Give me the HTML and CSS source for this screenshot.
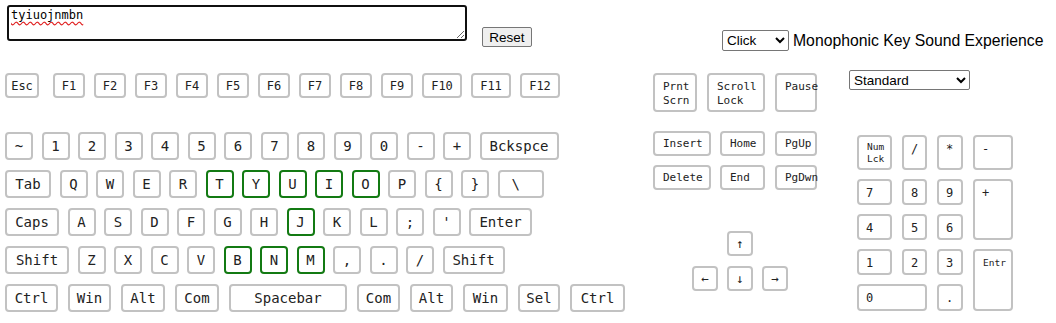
FILE: index.html
```html
<!DOCTYPE html>
<html lang="en">
<head>
<meta charset="utf-8">
<title>Keyboard</title>
<link rel="stylesheet" href="styles.css">
</head>
<body>
<div class="top">
  <textarea class="typed" spellcheck="false">tyiuojnmbn</textarea>
  <button class="reset">Reset</button>
  <div class="sound">
    <select class="sound-select"><option>Click</option></select>
    <span class="sound-label">Monophonic Key Sound Experience</span>
  </div>
</div>
<div class="board">
  <div class="main">
    <div class="row fn">
      <div class="key w-esc">Esc</div>
      <div class="key w-f">F1</div>
      <div class="key w-f">F2</div>
      <div class="key w-f">F3</div>
      <div class="key w-f">F4</div>
      <div class="key w-f">F5</div>
      <div class="key w-f">F6</div>
      <div class="key w-f">F7</div>
      <div class="key w-f">F8</div>
      <div class="key w-f">F9</div>
      <div class="key w-f10">F10</div>
      <div class="key w-f10">F11</div>
      <div class="key w-f10">F12</div>
    </div>
    <div class="row std">
      <div class="key">~</div>
      <div class="key">1</div>
      <div class="key">2</div>
      <div class="key">3</div>
      <div class="key">4</div>
      <div class="key">5</div>
      <div class="key">6</div>
      <div class="key">7</div>
      <div class="key">8</div>
      <div class="key">9</div>
      <div class="key">0</div>
      <div class="key">-</div>
      <div class="key">+</div>
      <div class="key w-bksp">Bckspce</div>
    </div>
    <div class="row std">
      <div class="key w-tab">Tab</div>
      <div class="key">Q</div>
      <div class="key">W</div>
      <div class="key">E</div>
      <div class="key">R</div>
      <div class="key on">T</div>
      <div class="key on">Y</div>
      <div class="key on">U</div>
      <div class="key on">I</div>
      <div class="key on">O</div>
      <div class="key">P</div>
      <div class="key">{</div>
      <div class="key">}</div>
      <div class="key w-tab left">\</div>
    </div>
    <div class="row std">
      <div class="key w-caps">Caps</div>
      <div class="key">A</div>
      <div class="key">S</div>
      <div class="key">D</div>
      <div class="key">F</div>
      <div class="key">G</div>
      <div class="key">H</div>
      <div class="key on">J</div>
      <div class="key">K</div>
      <div class="key">L</div>
      <div class="key">;</div>
      <div class="key">'</div>
      <div class="key w-enter">Enter</div>
    </div>
    <div class="row std">
      <div class="key w-shift">Shift</div>
      <div class="key">Z</div>
      <div class="key">X</div>
      <div class="key">C</div>
      <div class="key">V</div>
      <div class="key on">B</div>
      <div class="key on">N</div>
      <div class="key on">M</div>
      <div class="key">,</div>
      <div class="key">.</div>
      <div class="key">/</div>
      <div class="key w-rshift">Shift</div>
    </div>
    <div class="row bottom">
      <div class="key w-ctrl">Ctrl</div>
      <div class="key w-43">Win</div>
      <div class="key w-44">Alt</div>
      <div class="key w-44">Com</div>
      <div class="key w-space">Spacebar</div>
      <div class="key w-43">Com</div>
      <div class="key w-43">Alt</div>
      <div class="key w-45">Win</div>
      <div class="key w-42">Sel</div>
      <div class="key w-rctrl">Ctrl</div>
    </div>
  </div>

  <div class="nav">
    <div class="nav-row sys">
      <div class="key nk w-prnt">Prnt<br>Scrn</div>
      <div class="key nk w-scroll">Scroll<br>Lock</div>
      <div class="key nk w-pause">Pause</div>
    </div>
    <div class="nav-row edit first">
      <div class="key nk w-ins">Insert</div>
      <div class="key nk w-home">Home</div>
      <div class="key nk w-pg">PgUp</div>
    </div>
    <div class="nav-row edit">
      <div class="key nk w-ins">Delete</div>
      <div class="key nk w-home">End</div>
      <div class="key nk w-pg">PgDwn</div>
    </div>
    <div class="arrows">
      <div class="arrow-row up">
        <div class="key ak">&#8593;</div>
      </div>
      <div class="arrow-row">
        <div class="key ak">&#8592;</div>
        <div class="key ak">&#8595;</div>
        <div class="key ak">&#8594;</div>
      </div>
    </div>
  </div>

  <div class="numside">
    <select class="layout-select"><option>Standard</option></select>
    <div class="numpad">
      <div class="key pk small">Num<br>Lck</div>
      <div class="key pk">/</div>
      <div class="key pk">*</div>
      <div class="key pk">-</div>
      <div class="key pk">7</div>
      <div class="key pk">8</div>
      <div class="key pk">9</div>
      <div class="key pk tall">+</div>
      <div class="key pk">4</div>
      <div class="key pk">5</div>
      <div class="key pk">6</div>
      <div class="key pk">1</div>
      <div class="key pk">2</div>
      <div class="key pk">3</div>
      <div class="key pk tall small entr">Entr</div>
      <div class="key pk wide">0</div>
      <div class="key pk">.</div>
    </div>
  </div>
</div>
</body>
</html>
```

FILE: styles.css
```css
html, body {
  margin: 0;
  padding: 0;
  background: #ffffff;
}

body {
  font-family: "Liberation Sans", Arial, sans-serif;
  color: #000;
  width: 1056px;
  height: 323px;
  overflow: hidden;
}

/* ---------- top bar ---------- */
.top {
  display: flex;
  align-items: flex-start;
  height: 70px;
  box-sizing: border-box;
  padding: 5px 0 0 7px;
}

.typed {
  box-sizing: border-box;
  width: 460px;
  height: 36px;
  margin: 0;
  padding: 1px 2px;
  border: 2px solid #101010;
  border-radius: 3px;
  outline: none;
  font-family: "DejaVu Sans Mono", "Liberation Mono", monospace;
  font-size: 12px;
  line-height: 15px;
  color: #000;
  text-decoration: underline wavy #e02020;
  text-decoration-skip-ink: none;
  text-underline-offset: 2px;
}

.reset {
  box-sizing: border-box;
  width: 50px;
  height: 20px;
  margin: 22px 0 0 15px;
  padding: 0;
  font-family: "Liberation Sans", Arial, sans-serif;
  font-size: 13.5px;
  color: #000;
  background: #efefef;
  border: 1px solid #767676;
  border-radius: 2px;
}

.sound {
  display: flex;
  align-items: center;
  margin: 25px 0 0 190px;
}

.sound-select {
  box-sizing: border-box;
  width: 67px;
  height: 21px;
  margin: 0;
  font-family: "Liberation Sans", Arial, sans-serif;
  font-size: 13.5px;
  color: #000;
  background: #fff;
  border: 1px solid #767676;
  border-radius: 2px;
}

.sound-label {
  margin-left: 4px;
  font-size: 15.75px;
  color: #000;
  white-space: nowrap;
}

/* ---------- keyboard ---------- */
.board {
  display: flex;
  align-items: flex-start;
  padding-left: 5px;
}

.key {
  box-sizing: border-box;
  display: flex;
  align-items: center;
  justify-content: center;
  background: #fff;
  border: 2px solid #c2c2c2;
  border-radius: 4px;
  color: #222;
  font-family: "DejaVu Sans Mono", "Liberation Mono", monospace;
  white-space: nowrap;
}

.key.on {
  border-color: #137a13;
}

.main {
  width: 621px;
  margin-top: 3px;
}

.row {
  display: flex;
}

.row.fn {
  gap: 9px;
  height: 25px;
  margin-bottom: 34px;
}

.row.fn .key {
  height: 25px;
  font-size: 12px;
}

.w-esc { width: 34px; margin-right: 5px; }
.w-f { width: 32px; }
.w-f10 { width: 40px; }

.row.std {
  gap: 8.5px;
  height: 28px;
  margin-bottom: 10px;
}

.row.std .key,
.row.bottom .key {
  width: 28px;
  height: 28px;
  font-size: 14px;
}

.row.std .w-bksp { width: 79px; }
.row.std .w-tab { width: 46px; }
.row.std .w-caps { width: 54px; }
.row.std .w-enter { width: 63px; }
.row.std .w-shift { width: 64px; }
.row.std .w-rshift { width: 62px; }

.row.std .key.left {
  justify-content: flex-start;
  padding-left: 12px;
}

.row.bottom {
  gap: 10px;
  height: 28px;
}

.row.bottom .w-ctrl { width: 53px; }
.row.bottom .w-rctrl { width: 55px; }
.row.bottom .w-42 { width: 42px; }
.row.bottom .w-43 { width: 43px; }
.row.bottom .w-44 { width: 44px; }
.row.bottom .w-45 { width: 45px; }
.row.bottom .w-space { width: 118px; }

/* ---------- navigation cluster ---------- */
.nav {
  margin: 3px 0 0 27px;
  width: 164px;
}

.nav-row {
  display: flex;
  gap: 10px;
}

.nk {
  justify-content: flex-start;
  padding: 0 0 0 8px;
  font-size: 11px;
  line-height: 14px;
}

.nav-row.sys .nk {
  align-items: flex-start;
  height: 39px;
  padding-top: 5px;
}

.nav-row.edit {
  gap: 9px;
  margin-top: 9px;
}

.nav-row.edit.first {
  margin-top: 19px;
}

.nav-row.edit .nk {
  height: 25px;
}

.nav-row.edit .w-home { margin-right: 1px; }

.w-prnt { width: 44px; }
.w-scroll { width: 58px; }
.w-pause { width: 42px; }
.w-ins { width: 58px; }
.w-home { width: 45px; }
.w-pg { width: 42px; }

.arrows {
  margin-top: 41px;
  padding-left: 39px;
}

.arrow-row {
  display: flex;
  gap: 9px;
}

.arrow-row.up {
  padding-left: 35px;
  margin-bottom: 10px;
}

.ak {
  width: 26px;
  height: 25px;
  font-size: 12.5px;
  color: #222;
}

/* ---------- numpad ---------- */
.numside {
  margin-left: 32px;
}

.layout-select {
  display: block;
  box-sizing: border-box;
  width: 121px;
  height: 20px;
  margin: 0;
  font-family: "Liberation Sans", Arial, sans-serif;
  font-size: 13.5px;
  color: #000;
  background: #fff;
  border: 1px solid #767676;
  border-radius: 2px;
}

.numpad {
  display: grid;
  grid-template-columns: 35px 25px 26px 40px;
  grid-template-rows: 35px 26px 26px 26px 27px;
  column-gap: 10px;
  row-gap: 9px;
  margin: 45px 0 0 8px;
}

.pk {
  justify-content: flex-start;
  align-items: flex-start;
  padding: 5px 0 0 7px;
  font-size: 12px;
  line-height: 14px;
}

.pk.small {
  font-size: 9.5px;
  line-height: 12px;
  padding-top: 4px;
  padding-left: 8px;
}

.pk.tall {
  grid-row: span 2;
}

.pk.entr {
  padding-top: 6px;
}

.pk.wide {
  grid-column: span 2;
}
```
